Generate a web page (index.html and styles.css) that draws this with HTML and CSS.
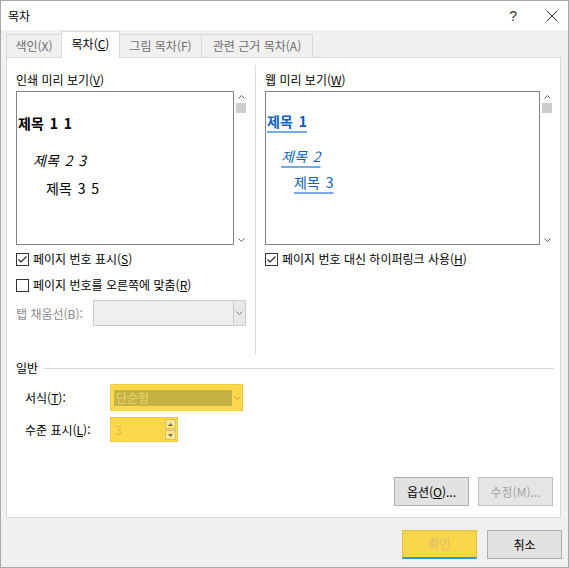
FILE: index.html
```html
<!DOCTYPE html>
<html lang="ko">
<head>
<meta charset="utf-8">
<link rel="stylesheet" href="styles.css">
</head>
<body>
<div class="dialog">
  <div class="titlebar">
    <span class="title">목차</span>
    <span class="help">?</span>
    <svg class="close" width="12" height="12" viewBox="0 0 12 12"><path d="M0.5 0.5 L11.5 11.5 M11.5 0.5 L0.5 11.5" stroke="#333" stroke-width="1" fill="none"/></svg>
  </div>
  <div class="tabs">
    <div class="tab t1">색인(X)</div>
    <div class="tab active t2">목차(<u>C</u>)</div>
    <div class="tab t3">그림 목차(F)</div>
    <div class="tab t4">관련 근거 목차(A)</div>
  </div>
  <div class="panel">
    <div class="columns">
      <div class="col left">
        <div class="label">인쇄 미리 보기(<u>V</u>)</div>
        <div class="preview-row">
          <div class="preview print">
            <div class="p1">제목 1 1</div>
            <div class="p2">제목 2 3</div>
            <div class="p3">제목 3 5</div>
          </div>
          <div class="scrollbar">
            <svg class="arr" width="7" height="4" viewBox="0 0 7 4"><path d="M0.5 3.5 L3.5 0.5 L6.5 3.5" stroke="#606060" fill="none"/></svg>
            <div class="thumb"></div>
            <div class="spacer"></div>
            <svg class="arr" width="7" height="4" viewBox="0 0 7 4"><path d="M0.5 0.5 L3.5 3.5 L6.5 0.5" stroke="#606060" fill="none"/></svg>
          </div>
        </div>
        <div class="check r1">
          <svg class="box" width="13" height="13" viewBox="0 0 13 13"><rect x="0.5" y="0.5" width="12" height="12" fill="#fff" stroke="#333"/><path d="M2.5 6.5 L5 9 L10.5 3.5" stroke="#222" stroke-width="1.1" fill="none"/></svg>
          <span>페이지 번호 표시(<u>S</u>)</span>
        </div>
        <div class="check r2">
          <svg class="box" width="13" height="13" viewBox="0 0 13 13"><rect x="0.5" y="0.5" width="12" height="12" fill="#fff" stroke="#333"/></svg>
          <span>페이지 번호를 오른쪽에 맞춤(<u>R</u>)</span>
        </div>
        <div class="leader">
          <span class="dis">탭 채움선(B):</span>
          <div class="combo-dis">
            <div class="cd-body"></div>
            <div class="cd-arrow"><svg width="7" height="4" viewBox="0 0 7 4"><path d="M0.5 0.5 L3.5 3.5 L6.5 0.5" stroke="#808080" fill="none"/></svg></div>
          </div>
        </div>
      </div>
      <div class="vsep"></div>
      <div class="col right">
        <div class="label">웹 미리 보기(<u>W</u>)</div>
        <div class="preview-row">
          <div class="preview web">
            <div class="w1"><span>제목 1</span></div>
            <div class="w2"><span>제목 2</span></div>
            <div class="w3"><span>제목 3</span></div>
          </div>
          <div class="scrollbar">
            <svg class="arr" width="7" height="4" viewBox="0 0 7 4"><path d="M0.5 3.5 L3.5 0.5 L6.5 3.5" stroke="#606060" fill="none"/></svg>
            <div class="thumb"></div>
            <div class="spacer"></div>
            <svg class="arr" width="7" height="4" viewBox="0 0 7 4"><path d="M0.5 0.5 L3.5 3.5 L6.5 0.5" stroke="#606060" fill="none"/></svg>
          </div>
        </div>
        <div class="check r1">
          <svg class="box" width="13" height="13" viewBox="0 0 13 13"><rect x="0.5" y="0.5" width="12" height="12" fill="#fff" stroke="#333"/><path d="M2.5 6.5 L5 9 L10.5 3.5" stroke="#222" stroke-width="1.1" fill="none"/></svg>
          <span>페이지 번호 대신 하이퍼링크 사용(<u>H</u>)</span>
        </div>
      </div>
    </div>
    <div class="group">
      <span>일반</span>
      <div class="gline"></div>
    </div>
    <div class="frow fmt">
      <span class="flabel">서식(<u>T</u>):</span>
      <div class="ycombo">
        <div class="ysel">단순형</div>
        <div class="yarrow"><svg width="7" height="4" viewBox="0 0 7 4"><path d="M0.5 0.5 L3.5 3.5 L6.5 0.5" stroke="#b8a050" fill="none"/></svg></div>
      </div>
    </div>
    <div class="frow lvl">
      <span class="flabel">수준 표시(<u>L</u>):</span>
      <div class="yspin">
        <div class="yval">3</div>
        <div class="spinbtns">
          <div class="sb up"><svg width="5" height="3" viewBox="0 0 5 3"><path d="M0 3 L2.5 0 L5 3 Z" fill="#707070"/></svg></div>
          <div class="sb down"><svg width="5" height="3" viewBox="0 0 5 3"><path d="M0 0 L2.5 3 L5 0 Z" fill="#707070"/></svg></div>
        </div>
      </div>
    </div>
    <div class="pbuttons">
      <div class="btn">옵션(<u>O</u>)...</div>
      <div class="btn disabled">수정(M)...</div>
    </div>
  </div>
  <div class="footer">
    <div class="btn ok">확인</div>
    <div class="btn">취소</div>
  </div>
</div>
</body>
</html>
```

FILE: styles.css
```css
* { box-sizing: border-box; }
html, body { margin: 0; padding: 0; }
body {
  font-family: "Noto Sans CJK KR", "Noto Sans", sans-serif;
  font-size: 12px;
  color: #000;
  background: #fff;
}
u { text-decoration: underline; text-underline-offset: 1px; }

.dialog {
  width: 569px;
  height: 568px;
  border: 1px solid #a9a9a9;
  background: #f0f0f0;
  display: flex;
  flex-direction: column;
}

.titlebar {
  height: 29px;
  background: #fff;
  display: flex;
  align-items: center;
  padding-left: 7px;
  flex-shrink: 0;
}
.title { font-size: 12px; line-height: 16px; flex: 1; }
.help { font-size: 14px; color: #333; line-height: 16px; margin-right: 29px; font-family: "Liberation Sans", sans-serif; font-weight: normal; }
.close { margin-right: 10px; }

.tabs {
  height: 27px;
  display: flex;
  align-items: flex-end;
  padding-left: 5px;
  flex-shrink: 0;
  position: relative;
  z-index: 2;
}
.tab {
  height: 23px;
  border: 1px solid #d9d9d9;
  border-bottom: none;
  background: #f0f0f0;
  color: #6e6e6e;
  line-height: 21px;
  text-align: center;
  margin-right: -1px;
}
.tab.active {
  background: #fff;
  color: #000;
  line-height: 24px;
  margin-bottom: -1px;
  height: 27px;
}
.t1 { width: 56px; }
.t2 { width: 59px; }
.t3 { width: 83px; }
.t4 { width: 112px; }

.panel {
  margin: 0 7px 0 5px;
  height: 461px;
  background: #fff;
  border: 1px solid #d9d9d9;
  padding: 0 6px 0 9px;
  display: flex;
  flex-direction: column;
  flex-shrink: 0;
}

.columns {
  height: 297px;
  display: flex;
  flex-shrink: 0;
}
.col { padding-top: 14px; }
.col.left { width: 230px; }
.col.right { width: 287px; }
.vsep {
  width: 1px;
  background: #dadada;
  margin: 7px 9px 0 9px;
}
.label { line-height: 16px; height: 16px; }

.preview-row {
  display: flex;
  margin-top: 3px;
  height: 154px;
}
.preview {
  height: 154px;
  border: 1px solid #828282;
  background: #fff;
}
.print { width: 218px; }
.web { width: 275px; }
.scrollbar {
  width: 10px;
  margin-left: 2px;
  display: flex;
  flex-direction: column;
  align-items: center;
  padding-top: 4px;
  padding-bottom: 3px;
}
.scrollbar .arr { display: block; }
.thumb {
  width: 10px;
  height: 10px;
  background: #cdcdcd;
  margin-top: 4px;
}
.spacer { flex: 1; }

.print > div, .web > div {
  font-size: 14px;
  line-height: 20px;
  height: 20px;
  white-space: nowrap;
  word-spacing: 2px;
}
.p1 { font-weight: bold; margin-top: 21px; padding-left: 1px; }
.p2 { font-style: italic; margin-top: 17px; padding-left: 16px; }
.p3 { margin-top: 8px; padding-left: 29px; }

.web > div span {
  color: #0a5fc0;
  text-decoration: underline;
  text-decoration-color: #79aae0;
  text-decoration-thickness: 2px;
  text-underline-offset: 4px;
}
.w1 { font-weight: bold; margin-top: 19px; padding-left: 1px; }
.w2 { font-style: italic; margin-top: 15px; padding-left: 15px; }
.w3 { margin-top: 6px; padding-left: 28px; }

.check {
  display: flex;
  align-items: center;
  height: 16px;
  line-height: 16px;
  white-space: nowrap;
}
.check .box { margin-right: 4px; flex-shrink: 0; }
.check.r1 { margin-top: 6px; }
.check.r2 { margin-top: 10px; }

.leader {
  display: flex;
  align-items: center;
  margin-top: 7px;
  height: 26px;
}
.dis { color: #8a8a8a; width: 77px; white-space: nowrap; }
.combo-dis {
  width: 153px;
  height: 26px;
  border: 1px solid #cccccc;
  background: #efefef;
  display: flex;
}
.cd-body { flex: 1; }
.cd-arrow {
  width: 12px;
  border-left: 1px solid #cccccc;
  background: #e8e8e8;
  display: flex;
  align-items: center;
  justify-content: center;
}
.cd-arrow svg { display: block; }

.group {
  display: flex;
  align-items: center;
  margin-top: 5px;
  height: 16px;
  line-height: 16px;
}
.gline {
  flex: 1;
  height: 1px;
  background: #dcdcdc;
  margin-left: 5px;
}

.frow {
  display: flex;
  align-items: center;
  padding-left: 9px;
}
.flabel { width: 85px; white-space: nowrap; }
.fmt { margin-top: 8px; height: 27px; }
.lvl { margin-top: 6px; height: 25px; }

.ycombo {
  width: 133px;
  height: 27px;
  background: #fcd84a;
  border: 1px solid #f0cc40;
  display: flex;
  align-items: center;
  padding-left: 3px;
}
.ysel {
  width: 118px;
  height: 16px;
  background: #c4b343;
  color: #e8d574;
  line-height: 16px;
  padding-left: 2px;
  font-size: 12px;
}
.yarrow {
  flex: 1;
  height: 25px;
  display: flex;
  align-items: center;
  justify-content: center;
}
.yarrow svg { display: block; }

.yspin {
  width: 68px;
  height: 25px;
  background: #fcd84a;
  border: 1px solid #f0cc40;
  display: flex;
  align-items: center;
  padding-left: 4px;
}
.yval { flex: 1; color: #e3b860; line-height: 16px; }
.spinbtns {
  width: 11px;
  margin-right: 1px;
  display: flex;
  flex-direction: column;
  gap: 1px;
}
.sb {
  height: 10px;
  border: 1px solid #d8c070;
  background: #fde68a;
  display: flex;
  align-items: center;
  justify-content: center;
}
.sb svg { display: block; }

.btn {
  width: 75px;
  height: 29px;
  background: #e1e1e1;
  border: 1px solid #adadad;
  display: flex;
  align-items: center;
  justify-content: center;
  line-height: 16px;
  white-space: nowrap;
}
.btn.disabled { color: #a3a3a3; border-color: #bfbfbf; background: #e5e5e5; }

.pbuttons {
  display: flex;
  justify-content: flex-end;
  gap: 9px;
  margin-top: 35px;
  padding-right: 1px;
}

.footer {
  display: flex;
  justify-content: flex-end;
  gap: 10px;
  margin-top: 12px;
  padding-right: 6px;
}
.btn.ok {
  background: #f9d54c;
  border: 1px solid #e4bf3c;
  border-bottom: 2px solid #3a8ee6;
  color: #dbbd6c;
}
```
